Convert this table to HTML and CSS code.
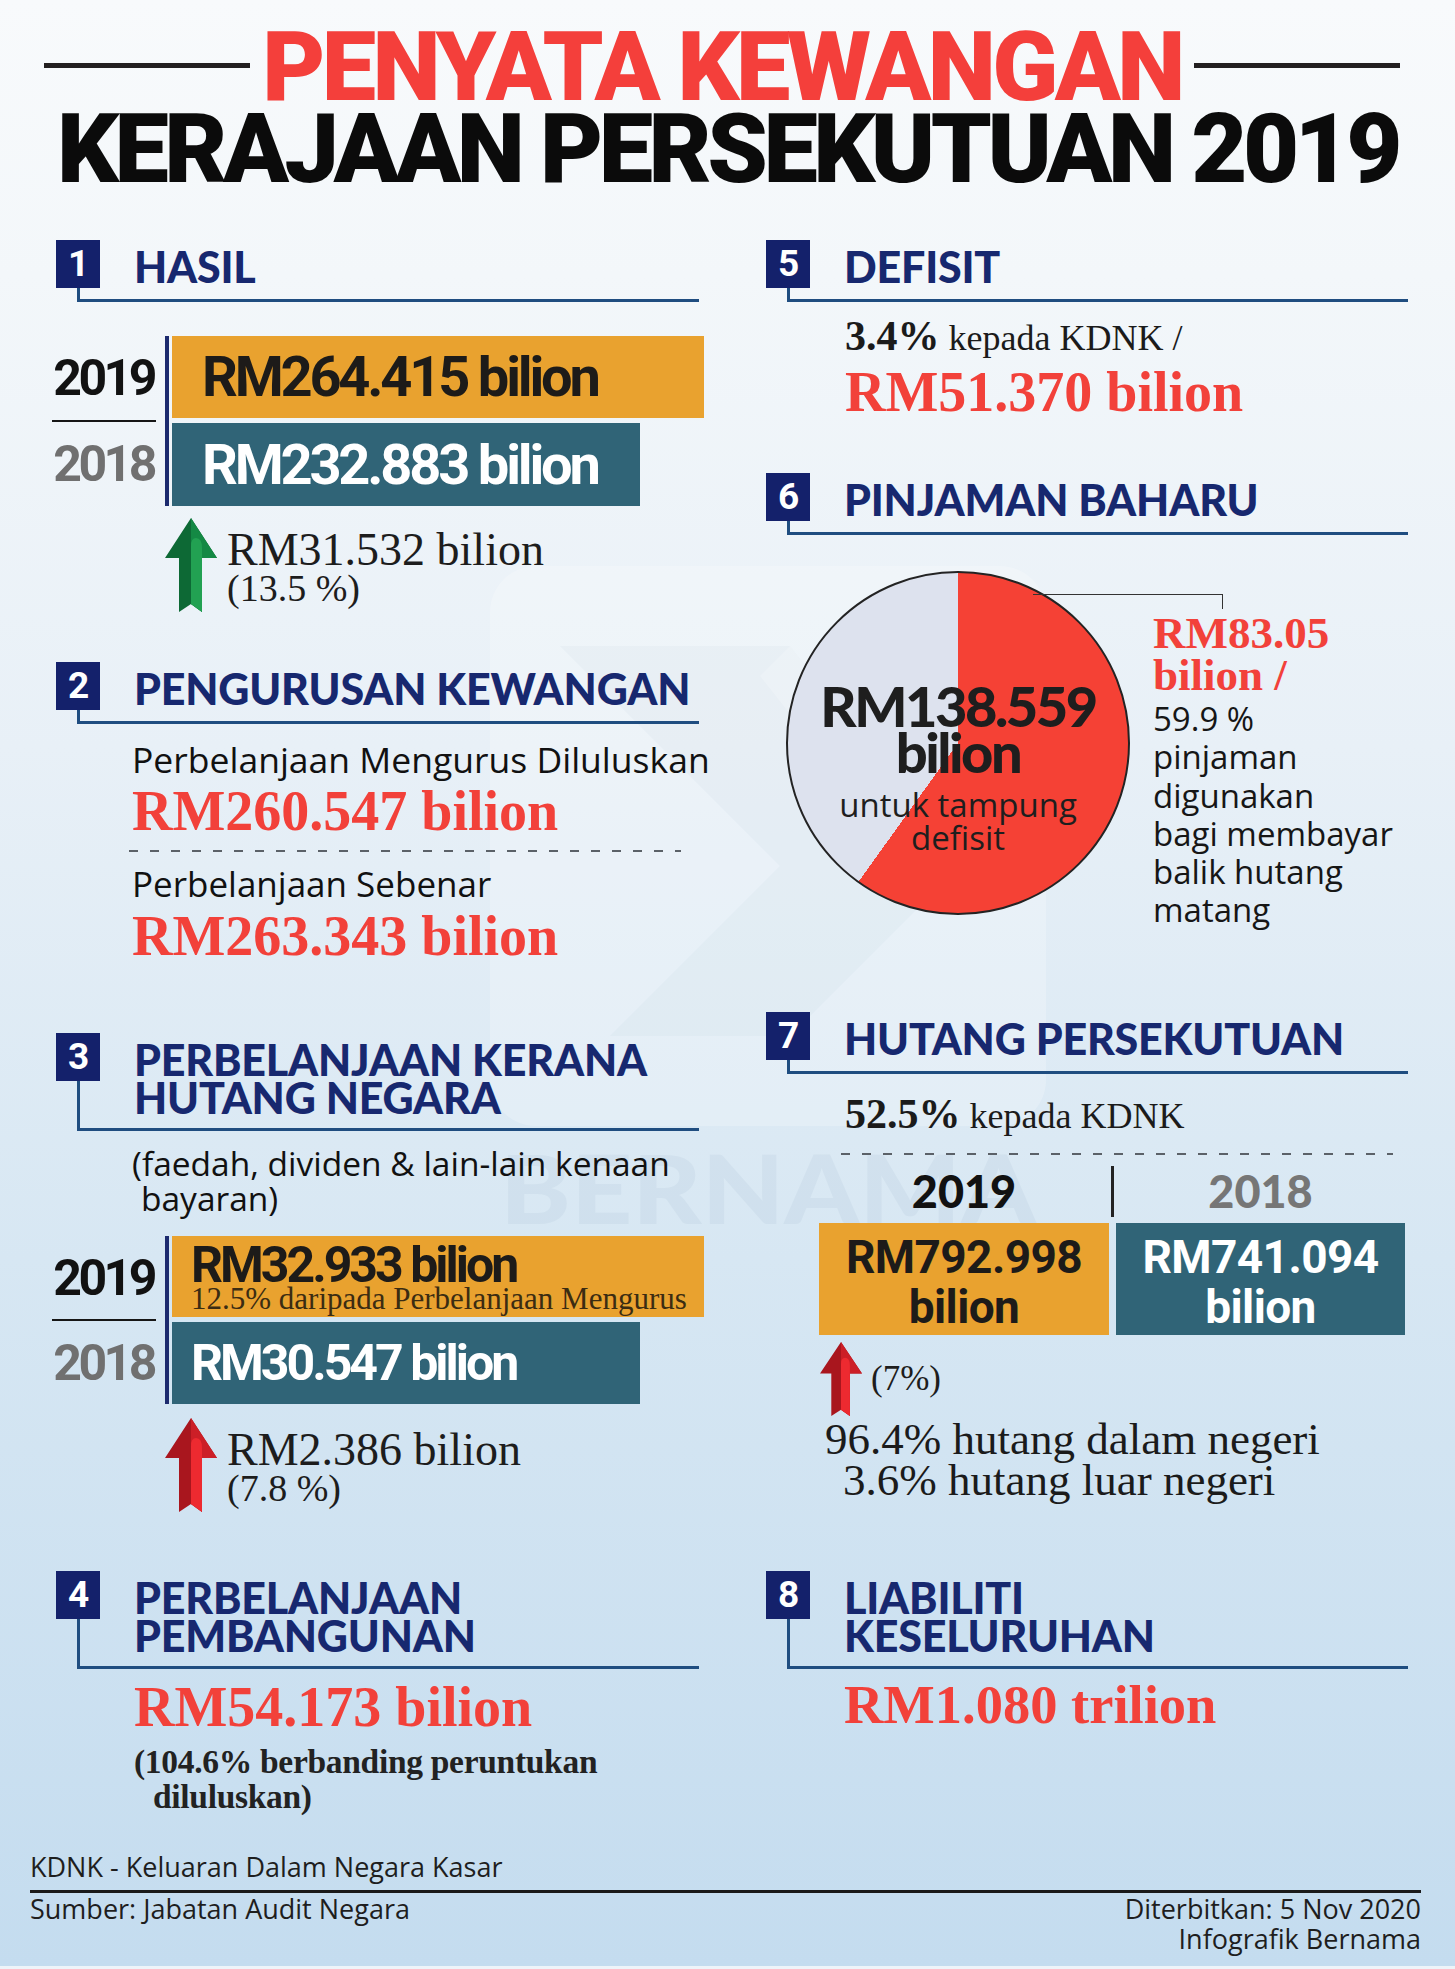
FILE: index.html
```html
<!DOCTYPE html>
<html lang="ms">
<head>
<meta charset="utf-8">
<title>Penyata Kewangan Kerajaan Persekutuan 2019</title>
<link rel="stylesheet" href="styles.css">
</head>
<body>
<div class="page">
  <svg class="watermark" viewBox="0 0 556 680" width="556" height="680" aria-hidden="true">
    <rect x="0" y="0" width="556" height="560" rx="46" fill="#ffffff" opacity="0.22"/>
    <polygon points="70,80 300,80 470,300 300,470 120,470 290,300" fill="#9fb6cc" opacity="0.07"/>
    <polygon points="300,80 470,300 420,300 270,110" fill="#ffffff" opacity="0.2"/>
    <text x="278" y="658" text-anchor="middle" font-family="Lato, sans-serif" font-weight="900" font-size="96" fill="#8ea7c0" opacity="0.11" textLength="536" lengthAdjust="spacingAndGlyphs">BERNAMA</text>
  </svg>

  <header class="masthead">
    <div class="mh-row1">
      <span class="mh-rule"></span>
      <h1 class="mh-red">PENYATA KEWANGAN</h1>
      <span class="mh-rule"></span>
    </div>
    <div class="mh-black">KERAJAAN PERSEKUTUAN 2019</div>
  </header>

  <main class="columns">
    <div class="col col-left">
      <section class="sec s1">
        <div class="sec-head"><span class="num">1</span><h2 class="sec-title">HASIL</h2></div>
        <div class="cmp">
          <div class="cmp-years"><span class="yr yr-now">2019</span><span class="yr yr-prev">2018</span></div>
          <div class="cmp-bars">
            <div class="bar bar-now"><span class="bar-val">RM264.415 bilion</span></div>
            <div class="bar bar-prev"><span class="bar-val">RM232.883 bilion</span></div>
          </div>
        </div>
        <div class="change">
          <svg class="arrow" viewBox="0 0 52 94" aria-hidden="true">
            <polygon points="26,0 52,40 37,40 37,94 26,86 14,94 14,40 0,40" fill="#0d6935"/>
            <polygon points="26,0 52,40 37,40 37,94 26,86" fill="#148944"/>
            <path d="M26,86 L37,94 L37,30 Q37,20 31,20 Q26,20 26,28 Z" fill="#22a152"/>
          </svg>
          <div class="change-text">
            <p class="change-val">RM31.532 bilion</p>
            <p class="change-pct">(13.5 %)</p>
          </div>
        </div>
      </section>

      <section class="sec s2">
        <div class="sec-head"><span class="num">2</span><h2 class="sec-title">PENGURUSAN KEWANGAN</h2></div>
        <div class="indent-l">
          <p class="lbl lbl-first">Perbelanjaan Mengurus Diluluskan</p>
          <p class="val-red val-tight">RM260.547 bilion</p>
          <div class="dash dash-s2"></div>
          <p class="lbl lbl-second">Perbelanjaan Sebenar</p>
          <p class="val-red val-tight">RM263.343 bilion</p>
        </div>
      </section>

      <section class="sec s3">
        <div class="sec-head"><span class="num">3</span><h2 class="sec-title">PERBELANJAAN KERANA<br>HUTANG NEGARA</h2></div>
        <div class="indent-l">
          <p class="note"><span class="note-line">(faedah, dividen &amp; lain-lain kenaan</span><span class="note-line note-cont">bayaran)</span></p>
        </div>
        <div class="cmp">
          <div class="cmp-years"><span class="yr yr-now">2019</span><span class="yr yr-prev">2018</span></div>
          <div class="cmp-bars">
            <div class="bar bar-now">
              <span class="bar-val">RM32.933 bilion</span>
              <span class="bar-sub">12.5% daripada Perbelanjaan Mengurus</span>
            </div>
            <div class="bar bar-prev"><span class="bar-val">RM30.547 bilion</span></div>
          </div>
        </div>
        <div class="change">
          <svg class="arrow" viewBox="0 0 52 94" aria-hidden="true">
            <polygon points="26,0 52,40 37,40 37,94 26,86 14,94 14,40 0,40" fill="#a9161e"/>
            <polygon points="26,0 52,40 37,40 37,94 26,86" fill="#cc1f27"/>
            <path d="M26,86 L37,94 L37,30 Q37,20 31,20 Q26,20 26,28 Z" fill="#ed2a30"/>
          </svg>
          <div class="change-text">
            <p class="change-val">RM2.386 bilion</p>
            <p class="change-pct">(7.8 %)</p>
          </div>
        </div>
      </section>

      <section class="sec s4">
        <div class="sec-head"><span class="num">4</span><h2 class="sec-title">PERBELANJAAN<br>PEMBANGUNAN</h2></div>
        <div class="indent-l4">
          <p class="val-red s4-val">RM54.173 bilion</p>
          <p class="note-bold"><span class="note-line">(104.6% berbanding peruntukan</span><span class="note-line note-bold-cont">diluluskan)</span></p>
        </div>
      </section>
    </div>

    <div class="col col-right">
      <section class="sec s5">
        <div class="sec-head"><span class="num">5</span><h2 class="sec-title">DEFISIT</h2></div>
        <div class="indent-r">
          <p class="kd kd-s5"><b class="kd-num">3.4%</b> kepada KDNK /</p>
          <p class="val-red s5-val">RM51.370 bilion</p>
        </div>
      </section>

      <section class="sec s6">
        <div class="sec-head"><span class="num">6</span><h2 class="sec-title">PINJAMAN BAHARU</h2></div>
        <div class="pie-wrap">
          <div class="pie">
            <p class="pie-big">RM138.559</p>
            <p class="pie-big">bilion</p>
            <p class="pie-small">untuk tampung<br>defisit</p>
          </div>
          <span class="leader"></span>
          <div class="loan-text">
            <p class="loan-red">RM83.05<br>bilion /</p>
            <p class="loan-desc">59.9 %<br>pinjaman<br>digunakan<br>bagi membayar<br>balik hutang<br>matang</p>
          </div>
        </div>
      </section>

      <section class="sec s7">
        <div class="sec-head"><span class="num">7</span><h2 class="sec-title">HUTANG PERSEKUTUAN</h2></div>
        <p class="kd kd-s7"><b class="kd-num">52.5%</b> kepada KDNK</p>
        <div class="dash dash-s7"></div>
        <div class="yrs7">
          <span class="yr7 yr7-now">2019</span>
          <span class="yr7-div"></span>
          <span class="yr7 yr7-prev">2018</span>
        </div>
        <div class="boxes7">
          <div class="box7 box7-now"><span>RM792.998</span><span>bilion</span></div>
          <div class="box7 box7-prev"><span>RM741.094</span><span>bilion</span></div>
        </div>
        <div class="updown">
          <svg class="arrow-sm" viewBox="0 0 52 94" preserveAspectRatio="none" aria-hidden="true">
            <polygon points="26,0 52,40 37,40 37,94 26,86 14,94 14,40 0,40" fill="#a9161e"/>
            <polygon points="26,0 52,40 37,40 37,94 26,86" fill="#cc1f27"/>
            <path d="M26,86 L37,94 L37,30 Q37,20 31,20 Q26,20 26,28 Z" fill="#ed2a30"/>
          </svg>
          <span class="updown-pct">(7%)</span>
        </div>
        <p class="debt"><span class="note-line">96.4% hutang dalam negeri</span><span class="note-line debt-cont">3.6% hutang luar negeri</span></p>
      </section>

      <section class="sec s8">
        <div class="sec-head"><span class="num">8</span><h2 class="sec-title">LIABILITI<br>KESELURUHAN</h2></div>
        <p class="val-red s8-val">RM1.080 trilion</p>
      </section>
    </div>
  </main>

  <footer class="foot">
    <p class="foot-note">KDNK - Keluaran Dalam Negara Kasar</p>
    <div class="foot-rule"></div>
    <div class="foot-row">
      <p>Sumber: Jabatan Audit Negara</p>
      <p class="foot-right">Diterbitkan: 5 Nov 2020<br>Infografik Bernama</p>
    </div>
  </footer>
</div>
</body>
</html>
```

FILE: styles.css
```css
* { box-sizing: border-box; margin: 0; padding: 0; }

body {
  margin: 0;
  font-family: "Open Sans", "Liberation Sans", sans-serif;
  color: #1b1b1b;
}

.page {
  position: relative;
  z-index: 0;
  width: 1455px;
  height: 1969px;
  overflow: hidden;
  display: flex;
  flex-direction: column;
  background: linear-gradient(180deg, #f8fafc 0%, #f3f7fa 14%, #e8f0f7 38%, #d7e7f3 64%, #c4dcef 100%);
  border-bottom: 3px solid #eef4f9;
}

.watermark {
  position: absolute;
  left: 490px;
  top: 566px;
  z-index: -1;
  overflow: visible;
}

/* ---------- masthead ---------- */
.masthead { padding-top: 26px; }

.mh-row1 {
  display: flex;
  align-items: center;
  gap: 12px;
  height: 82px;
  padding: 0 55px 0 44px;
}

.mh-rule {
  flex: 1;
  height: 5px;
  margin-top: -4px;
  background: #231f20;
}

.mh-red,
.mh-black {
  font-family: Roboto, "Liberation Sans", sans-serif;
  font-weight: 900;
  font-size: 97px;
  line-height: 82px;
  white-space: nowrap;
}

.mh-red { color: #f43f3b; letter-spacing: -3.6px; }

.mh-black {
  height: 82px;
  color: #0b0b0b;
  text-align: center;
  letter-spacing: -4.5px;
}

/* ---------- columns ---------- */
.columns {
  display: grid;
  grid-template-columns: 648px 642px;
  column-gap: 62px;
  align-items: start;
  padding-left: 56px;
  margin-top: 50px;
}

.col { display: flex; flex-direction: column; }

/* ---------- section heads ---------- */
.sec-head {
  display: flex;
  align-items: flex-start;
  margin-left: 21px;
  border-left: 3px solid #1f4d80;
  border-bottom: 3px solid #1f4d80;
  padding-bottom: 11px;
}

.col-left .sec-head { margin-right: 5px; }

.num {
  flex: none;
  width: 44px;
  height: 48px;
  margin-left: -24px;
  background: #14216b;
  color: #fff;
  font: 700 37px/48px Roboto, "Liberation Sans", sans-serif;
  letter-spacing: -1px;
  text-align: center;
}

.sec-title {
  margin-left: 34px;
  padding-top: 8px;
  font: 900 43px/38px Lato, "Liberation Sans", sans-serif;
  color: #17286f;
  letter-spacing: -0.2px;
  white-space: nowrap;
}

/* ---------- comparison bars ---------- */
.cmp { display: flex; margin-left: -4px; }
.s1 .cmp { margin-top: 34px; }
.s3 .cmp { margin-top: 20px; }

.cmp-years {
  width: 104px;
  margin-right: 9px;
  display: flex;
  flex-direction: column;
}

.yr {
  flex: 1;
  display: flex;
  align-items: center;
  justify-content: flex-end;
  padding-right: 2px;
  font: 700 50px/1 Roboto, "Liberation Sans", sans-serif;
  letter-spacing: -3.5px;
}

.yr-now { color: #121212; border-bottom: 2px solid #161616; }
.yr-prev { color: #707070; }

.cmp-bars {
  flex: 1;
  display: flex;
  flex-direction: column;
  gap: 5px;
  border-left: 4px solid #1c2a6e;
  padding-left: 3px;
}

.bar { display: flex; align-items: center; }
.bar-now { background: #e9a22f; color: #1d1b19; }
.bar-prev { background: #306477; color: #fff; width: 468px; }

.bar-val {
  font: 700 56px/1 Roboto, "Liberation Sans", sans-serif;
  letter-spacing: -3.2px;
  white-space: nowrap;
}

.s1 .bar-now { height: 82px; padding-left: 30px; }
.s1 .bar-prev { height: 83px; padding-left: 30px; }

.s3 .bar-now {
  height: 81px;
  padding: 8px 0 0 19px;
  flex-direction: column;
  align-items: flex-start;
}
.s3 .bar-prev { height: 82px; padding-left: 19px; }
.s3 .bar-val { font-size: 50px; letter-spacing: -3px; }
.s3 .bar-now .bar-val { line-height: 42px; }

.bar-sub {
  font: 31px/26px "Liberation Serif", serif;
  color: #3b2c12;
  white-space: nowrap;
}

/* ---------- change arrows ---------- */
.change {
  display: flex;
  align-items: flex-start;
  gap: 10px;
  margin-left: 109px;
}
.s1 .change { margin-top: 12px; }
.s3 .change { margin-top: 14px; }

.arrow { flex: none; width: 52px; height: 94px; }

.change-text { margin-top: 12px; }

.change-val {
  font: 46px/40px "Liberation Serif", serif;
  color: #1d1d1d;
  white-space: nowrap;
}

.change-pct {
  font: 38px/36px "Liberation Serif", serif;
  color: #1d1d1d;
  white-space: nowrap;
}

/* ---------- text blocks ---------- */
.indent-l { padding-left: 76px; }
.indent-l4 { padding-left: 78px; }
.indent-r { padding-left: 79px; }

.lbl {
  font: 35px/40px "Open Sans", sans-serif;
  color: #111;
  white-space: nowrap;
}
.lbl-first { margin-top: 15px; font-size: 35.5px; }
.lbl-second { margin-top: 12px; }

.val-red {
  font: 700 56px/50px "Liberation Serif", serif;
  color: #f2413a;
  white-space: nowrap;
}
.val-tight { margin-top: 7px; }

.dash {
  height: 2px;
  width: 552px;
  background: repeating-linear-gradient(90deg, #5b6168 0 9px, transparent 9px 21px);
}
.dash-s2 { margin-top: 14px; margin-left: -3px; }
.dash-s7 { margin-top: 15px; margin-left: 75px; }

.note {
  margin-top: 15px;
  font: 33.5px/35px "Open Sans", sans-serif;
  color: #111;
}
.note-line { display: block; white-space: nowrap; }
.note-cont { padding-left: 9px; }

.note-bold {
  margin-top: 12px;
  font: 700 33.5px/35px "Liberation Serif", serif;
  color: #222;
  letter-spacing: -0.3px;
}
.note-bold-cont { padding-left: 19px; }

.s2 { margin-top: 50px; }
.s3 { margin-top: 72px; }
.s4 { margin-top: 59px; }
.s4-val { margin-top: 13px; }

/* ---------- right column ---------- */
.kd {
  font: 36px/44px "Liberation Serif", serif;
  color: #1b1b1b;
  white-space: nowrap;
}
.kd-num { font-weight: 700; font-size: 42px; }
.kd-s5 { margin-top: 12px; }
.kd-s7 { margin-top: 18px; padding-left: 79px; }

.s5-val { margin-top: 7px; }

.s6 { margin-top: 56px; }

.pie-wrap {
  position: relative;
  display: flex;
  align-items: flex-start;
  gap: 23px;
  margin-top: 36px;
  padding-left: 20px;
}

.pie {
  flex: none;
  width: 344px;
  height: 344px;
  border-radius: 50%;
  border: 2.5px solid #232323;
  background: conic-gradient(#f54135 0 59.9%, #dde2ee 59.9% 100%);
  display: flex;
  flex-direction: column;
  align-items: center;
  padding-top: 110px;
}

.pie-big {
  font: 900 56px/46px Lato, "Liberation Sans", sans-serif;
  letter-spacing: -2.5px;
  color: #1e1e1e;
  white-space: nowrap;
}

.pie-small {
  margin-top: 13px;
  font: 33px/33px "Open Sans", sans-serif;
  color: #1e1e1e;
  text-align: center;
  white-space: nowrap;
}

.leader {
  position: absolute;
  left: 267px;
  top: 23px;
  width: 190px;
  height: 15px;
  border-top: 1.5px solid #333;
  border-right: 1.5px solid #333;
}

.loan-text { margin-top: 41px; }

.loan-red {
  font: 700 45px/42px "Liberation Serif", serif;
  color: #f2413a;
  white-space: nowrap;
}

.loan-desc {
  margin-top: 4px;
  font: 33px/38.3px "Open Sans", sans-serif;
  color: #161616;
  white-space: nowrap;
}

.s7 { margin-top: 82px; }

.yrs7 {
  display: grid;
  grid-template-columns: 290px 7px 289px;
  height: 51px;
  margin-top: 11px;
  margin-left: 53px;
}

.yr7 {
  font: 900 45px/51px Lato, "Liberation Sans", sans-serif;
  text-align: center;
}
.yr7-now { color: #111; }
.yr7-prev { color: #767676; }
.yr7-div { width: 3px; background: #232323; justify-self: center; }

.boxes7 {
  display: flex;
  gap: 7px;
  margin-top: 6px;
  margin-left: 53px;
}

.box7 {
  width: 290px;
  height: 112px;
  padding-top: 6px;
  display: flex;
  flex-direction: column;
  align-items: center;
  justify-content: center;
  font: 700 46px/50px Roboto, "Liberation Sans", sans-serif;
  letter-spacing: -0.6px;
}
.box7-now { background: #e9a22f; color: #1d1b19; }
.box7-prev { background: #306477; color: #fff; width: 289px; }

.updown {
  display: flex;
  align-items: center;
  gap: 9px;
  margin-top: 7px;
  margin-left: 54px;
}
.arrow-sm { flex: none; width: 42px; height: 74px; }
.updown-pct { font: 35px/40px "Liberation Serif", serif; color: #1d1d1d; }

.debt {
  margin-top: 3px;
  padding-left: 59px;
  font: 45px/41px "Liberation Serif", serif;
  color: #1b1b1b;
}
.debt-cont { padding-left: 18px; }

.s8 { margin-top: 70px; }
.s8-val { margin-top: 11px; padding-left: 78px; font-size: 54.5px; }

/* ---------- footer ---------- */
.foot {
  margin-top: auto;
  padding: 0 34px 12px 30px;
  color: #1e1e1e;
}

.foot-note { font: 27px/32px "Open Sans", sans-serif; }

.foot-rule {
  height: 3px;
  margin-top: 7px;
  background: #1a1a1a;
}

.foot-row {
  display: flex;
  justify-content: space-between;
  margin-top: 1.5px;
  font: 27px/30px "Open Sans", sans-serif;
}

.foot-right { text-align: right; }
```
